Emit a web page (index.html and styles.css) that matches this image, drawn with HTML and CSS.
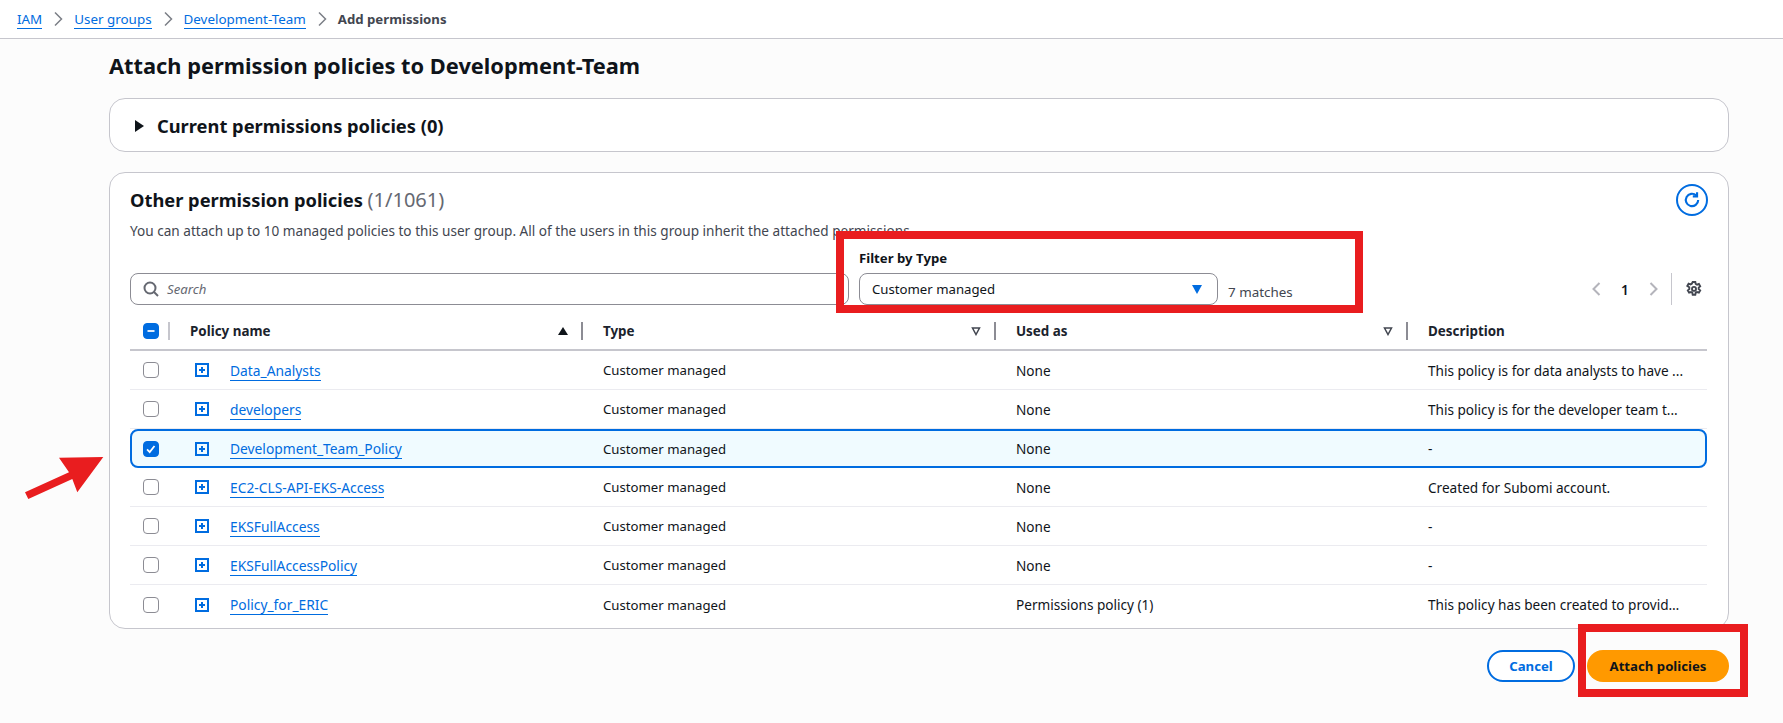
FILE: index.html
```html
<!DOCTYPE html>
<html lang="en">
<head>
    <meta charset="UTF-8">
    <meta name="viewport" content="width=device-width, initial-scale=1.0">
    <title>Add permissions</title>
    <link rel="stylesheet" href="styles.css">
</head>
<body>

    <!-- Breadcrumbs -->
    <nav class="crumbs">
        <a href="#">IAM</a>
        <svg class="crumb-sep" viewBox="0 0 16 16"><path d="M5 1.5 11.5 8 5 14.5"/></svg>
        <a href="#">User groups</a>
        <svg class="crumb-sep" viewBox="0 0 16 16"><path d="M5 1.5 11.5 8 5 14.5"/></svg>
        <a href="#">Development-Team</a>
        <svg class="crumb-sep" viewBox="0 0 16 16"><path d="M5 1.5 11.5 8 5 14.5"/></svg>
        <span class="crumb-current">Add permissions</span>
    </nav>

    <main class="page">
        <h1>Attach permission policies to Development-Team</h1>

        <section class="card card-collapsed">
            <span class="caret-right"></span>
            <h2>Current permissions policies (0)</h2>
        </section>

        <section class="card card-table">
            <div class="card-head">
                <h2>Other permission policies <span class="count">(1/1061)</span></h2>
                <button class="refresh" type="button" aria-label="Refresh">
                    <svg viewBox="0 0 16 16"><path d="M13.500 8a5.500 5.500 0 1 1-1.700-4"/><path d="M12.500 1v3.800H8.700"/></svg>
                </button>
            </div>
            <p class="card-desc">You can attach up to 10 managed policies to this user group. All of the users in this group inherit the attached permissions.</p>

            <div class="toolbar">
                <div class="search">
                    <svg viewBox="0 0 16 16"><circle cx="7" cy="7" r="5.5"/><path d="m11 11 4 4"/></svg>
                    <span>Search</span>
                </div>
                <div class="filter">
                    <label>Filter by Type</label>
                    <div class="select">
                        <span>Customer managed</span>
                        <span class="select-caret"></span>
                    </div>
                </div>
                <span class="matches">7 matches</span>
                <div class="pager">
                    <svg class="pager-arrow" viewBox="0 0 16 16"><path d="M10.5 2 4.5 8l6 6"/></svg>
                    <span class="page-num">1</span>
                    <svg class="pager-arrow" viewBox="0 0 16 16"><path d="m5.5 2 6 6-6 6"/></svg>
                    <span class="pager-sep"></span>
                    <svg class="gear" viewBox="0 0 16 16">
                        <path d="M6.700 1h2.600l.4 2 1.300.7 1.900-.7 1.300 2.300-1.500 1.300v1.500l1.500 1.300-1.300 2.300-1.900-.7-1.300.7-.4 2H6.700l-.4-2-1.300-.7-1.900.7-1.300-2.300 1.500-1.300V6.300L1.300 5l1.300-2.300 1.900.7 1.300-.7z"/>
                        <circle cx="8" cy="7.900" r="2"/>
                    </svg>
                </div>
            </div>

            <div class="table">
                <div class="row row-head">
                    <div class="cell-check">
                        <span class="check check-on"><svg viewBox="0 0 16 16"><path d="M4 8h8"/></svg></span>
                        <span class="divider"></span>
                    </div>
                    <div class="col-head">
                        <span>Policy name</span>
                        <span class="sort-asc"></span>
                        <span class="divider"></span>
                    </div>
                    <div class="col-head">
                        <span>Type</span>
                        <svg class="sort-none" viewBox="0 0 10 10"><path d="M1.500 2h7L5 8.500z"/></svg>
                        <span class="divider"></span>
                    </div>
                    <div class="col-head">
                        <span>Used as</span>
                        <svg class="sort-none" viewBox="0 0 10 10"><path d="M1.500 2h7L5 8.500z"/></svg>
                        <span class="divider"></span>
                    </div>
                    <div class="col-head"><span>Description</span></div>
                </div>

                <div class="row">
                    <div class="cell-check"><span class="check"></span></div>
                    <div class="cell-expand"><span class="expand"></span></div>
                    <div><a href="#">Data_Analysts</a></div>
                    <div class="cell-type">Customer managed</div>
                    <div>None</div>
                    <div>This policy is for data analysts to have ...</div>
                </div>
                <div class="row">
                    <div class="cell-check"><span class="check"></span></div>
                    <div class="cell-expand"><span class="expand"></span></div>
                    <div><a href="#">developers</a></div>
                    <div class="cell-type">Customer managed</div>
                    <div>None</div>
                    <div>This policy is for the developer team t...</div>
                </div>
                <div class="row row-selected">
                    <div class="cell-check">
                        <span class="check check-on"><svg viewBox="0 0 16 16"><path d="m3.500 8.500 3 3 5.500-7"/></svg></span>
                    </div>
                    <div class="cell-expand"><span class="expand"></span></div>
                    <div><a href="#">Development_Team_Policy</a></div>
                    <div class="cell-type">Customer managed</div>
                    <div>None</div>
                    <div>-</div>
                </div>
                <div class="row">
                    <div class="cell-check"><span class="check"></span></div>
                    <div class="cell-expand"><span class="expand"></span></div>
                    <div><a href="#">EC2-CLS-API-EKS-Access</a></div>
                    <div class="cell-type">Customer managed</div>
                    <div>None</div>
                    <div>Created for Subomi account.</div>
                </div>
                <div class="row">
                    <div class="cell-check"><span class="check"></span></div>
                    <div class="cell-expand"><span class="expand"></span></div>
                    <div><a href="#">EKSFullAccess</a></div>
                    <div class="cell-type">Customer managed</div>
                    <div>None</div>
                    <div>-</div>
                </div>
                <div class="row">
                    <div class="cell-check"><span class="check"></span></div>
                    <div class="cell-expand"><span class="expand"></span></div>
                    <div><a href="#">EKSFullAccessPolicy</a></div>
                    <div class="cell-type">Customer managed</div>
                    <div>None</div>
                    <div>-</div>
                </div>
                <div class="row row-last">
                    <div class="cell-check"><span class="check"></span></div>
                    <div class="cell-expand"><span class="expand"></span></div>
                    <div><a href="#">Policy_for_ERIC</a></div>
                    <div class="cell-type">Customer managed</div>
                    <div>Permissions policy (1)</div>
                    <div>This policy has been created to provid…</div>
                </div>
            </div>
        </section>

        <div class="actions">
            <button class="btn btn-cancel" type="button">Cancel</button>
            <button class="btn btn-primary" type="button">Attach policies</button>
        </div>
    </main>

    <!-- Red annotations drawn over the screenshot -->
    <div class="mark mark-filter"></div>
    <div class="mark mark-attach"></div>
    <svg class="mark-arrow" viewBox="0 0 110 510">
        <path d="M103.300 457 59 457.700 69 472.300 25 492.300 28.300 499 72.300 479 77.300 492.300z"/>
    </svg>

</body>
</html>
```

FILE: styles.css
```css
* {
    box-sizing: border-box;
}

body {
    margin: 0;
    height: 723px;
    overflow: hidden;
    background-color: #fcfcfc;
    color: #0f141a;
    font-family: "Noto Sans", Arial, sans-serif;
    font-size: 13.6px;
}

a {
    color: #006ce0;
    font-size: 13.8px;
    text-decoration: none;
    border-bottom: 1px solid #006ce0;
}

h1, h2, p {
    margin: 0;
}

svg {
    display: block;
    fill: none;
}

button {
    font-family: inherit;
}

/* Breadcrumbs */
.crumbs {
    display: flex;
    align-items: center;
    height: 39px;
    padding-left: 17px;
    background-color: white;
    border-bottom: 1px solid #c6c6cd;
    font-size: 13.2px;
}

.crumbs a {
    font-size: 13.4px;
    line-height: 18px;
}

.crumb-sep {
    width: 16px;
    height: 16px;
    margin: 0 8px;
    stroke: #7c7f87;
    stroke-width: 1.5;
}

.crumb-current {
    font-weight: 700;
    color: #424650;
}

/* Page */
.page {
    width: 1620px;
    margin-left: 109px;
}

h1 {
    height: 59px;
    padding-top: 11px;
    font-size: 21.8px;
    line-height: 32px;
    font-weight: 700;
}

.card {
    background-color: white;
    border: 1px solid #c6c6cd;
    border-radius: 16px;
}

.card-collapsed {
    display: flex;
    align-items: center;
    height: 54px;
    padding: 2px 0 0 25px;
    margin-bottom: 20px;
}

.caret-right {
    width: 0;
    height: 0;
    border-left: 9px solid #0f141a;
    border-top: 6px solid transparent;
    border-bottom: 6px solid transparent;
    margin-right: 13px;
}

h2 {
    font-size: 18.3px;
    line-height: 24px;
    font-weight: 700;
}

.card-table {
    height: 457px;
    padding: 0 21px 0 20px;
}

.card-head {
    display: flex;
    justify-content: space-between;
    height: 43px;
    padding-top: 15px;
}

.count {
    font-size: 20px;
    font-weight: 400;
    color: #656871;
}

.refresh {
    width: 32px;
    height: 32px;
    padding: 5px;
    margin: -4px -1px 0 0;
    background: white;
    border: 2px solid #006ce0;
    border-radius: 50%;
}

.refresh svg {
    stroke: #006ce0;
    stroke-width: 1.9;
}

.card-desc {
    height: 34px;
    padding-top: 6px;
    line-height: 18px;
    color: #424650;
}

/* Toolbar */
.toolbar {
    display: flex;
    align-items: flex-end;
    height: 55px;
}

.search {
    display: flex;
    align-items: center;
    width: 719px;
    height: 32px;
    padding-left: 12px;
    border: 1px solid #8c8c94;
    border-radius: 8px;
    color: #656871;
    font-style: italic;
    font-size: 13.2px;
}

.search svg {
    width: 16px;
    height: 16px;
    margin-right: 8px;
    stroke: #656871;
    stroke-width: 2;
}

.filter {
    width: 359px;
    margin-left: 10px;
    font-size: 13.2px;
}

.filter label {
    display: block;
    margin-bottom: 6px;
    font-weight: 700;
    line-height: 18px;
}

.select {
    display: flex;
    align-items: center;
    justify-content: space-between;
    height: 32px;
    padding: 0 15px 0 12px;
    border: 1px solid #8c8c94;
    border-radius: 8px;
}

.select-caret {
    width: 0;
    height: 0;
    border-top: 9px solid #006ce0;
    border-left: 5.5px solid transparent;
    border-right: 5.5px solid transparent;
}

.matches {
    margin-left: 10px;
    line-height: 26px;
    font-size: 13.4px;
    color: #424650;
}

.pager {
    display: flex;
    align-items: center;
    height: 32px;
    margin-left: auto;
}

.pager-arrow {
    width: 16px;
    height: 16px;
    stroke: #b4b4bb;
    stroke-width: 2;
}

.page-num {
    width: 24px;
    margin: 0 8px;
    text-align: center;
    font-weight: 600;
}

.pager-sep {
    width: 1px;
    height: 32px;
    margin: 0 14px 0 10px;
    background-color: #c6c6cd;
}

.gear {
    width: 16px;
    height: 16px;
    margin-right: 5px;
    stroke: #424650;
    stroke-width: 1.9;
}

/* Table */
.row {
    display: grid;
    grid-template-columns: 60px 40px 373px 413px 412px 279px;
    align-items: center;
    height: 39px;
    border-bottom: 1px solid #ebebf0;
}

.row-head {
    grid-template-columns: 60px 413px 413px 412px 279px;
    height: 38px;
    margin-top: 8px;
    border-bottom: 2px solid #c6c6cd;
    font-size: 13.4px;
    font-weight: 700;
    color: #1b232d;
}

.row-last {
    border-bottom: none;
}

.row-selected {
    grid-template-columns: 58px 40px 373px 413px 412px 277px;
    background-color: #f0fbff;
    border: 2px solid #006ce0;
    border-radius: 8px;
}

.row-selected .cell-check {
    padding-left: 11px;
}

.cell-type {
    font-size: 13.2px;
}

.cell-check {
    display: flex;
    align-items: center;
    padding-left: 13px;
}

.check {
    display: flex;
    width: 16px;
    height: 16px;
    background-color: white;
    border: 1px solid #8c8c94;
    border-radius: 4px;
}

.check-on {
    background-color: #006ce0;
    border-color: #006ce0;
}

.check-on svg {
    width: 14px;
    height: 14px;
    stroke: white;
    stroke-width: 2;
}

.divider {
    flex: none;
    width: 2px;
    height: 18px;
    margin-left: 9px;
    background-color: #c6c6cd;
}

.col-head {
    display: flex;
    align-items: center;
    padding-right: 20px;
}

.col-head span:first-child {
    margin-right: auto;
}

.col-head .divider {
    margin-left: 13px;
    background-color: #8c8c94;
}

.sort-asc {
    width: 0;
    height: 0;
    border-bottom: 8px solid #0f141a;
    border-left: 5px solid transparent;
    border-right: 5px solid transparent;
}

.sort-none {
    width: 10px;
    height: 10px;
    stroke: #424650;
    stroke-width: 1.5;
}

.cell-expand {
    display: flex;
    padding-left: 5px;
}

.expand {
    width: 14px;
    height: 14px;
    border: 2px solid #006ce0;
    background:
        linear-gradient(#006ce0, #006ce0) center / 6px 2px no-repeat,
        linear-gradient(#006ce0, #006ce0) center / 2px 6px no-repeat;
}

/* Buttons */
.actions {
    display: flex;
    justify-content: flex-end;
    gap: 12px;
    margin-top: 21px;
}

.btn {
    height: 32px;
    border-radius: 16px;
    font-size: 13.2px;
    font-weight: 700;
}

.btn-cancel {
    width: 88px;
    background-color: white;
    border: 2px solid #006ce0;
    color: #006ce0;
}

.btn-primary {
    width: 142px;
    background-color: #ff9900;
    border: none;
    color: #0f141a;
}

/* Annotations */
.mark {
    position: absolute;
    border: 8px solid #e91d1f;
}

.mark-filter {
    left: 836px;
    top: 231px;
    width: 527px;
    height: 82px;
}

.mark-attach {
    left: 1578px;
    top: 624px;
    width: 170px;
    height: 73px;
}

.mark-arrow {
    position: absolute;
    left: 0;
    top: 0;
    width: 110px;
    height: 510px;
    fill: #e91d1f;
}
```
